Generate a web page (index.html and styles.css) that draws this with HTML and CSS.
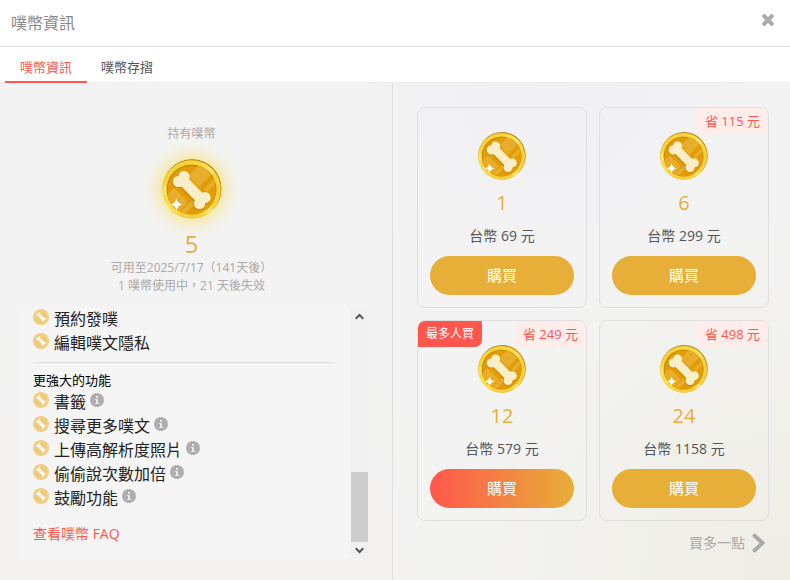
FILE: index.html
```
<!DOCTYPE html>
<html lang="zh-Hant">
<head>
  <meta charset="UTF-8" />
  <meta name="viewport" content="width=device-width, initial-scale=1.0" />
  <title>噗幣資訊</title>
  <link rel="stylesheet" href="styles.css">
</head>
<body>

  <!-- Shared icons -->
  <svg class="sprite" aria-hidden="true">
    <defs>
      <linearGradient id="rim" x1="0" y1="0" x2="1" y2="1">
        <stop offset="0" stop-color="#f3c92c" />
        <stop offset=".45" stop-color="#fae04a" />
        <stop offset=".7" stop-color="#f3cf3c" />
        <stop offset="1" stop-color="#fbdc3c" />
      </linearGradient>
      <clipPath id="face"><circle cx="29.5" cy="30.5" r="24.5" /></clipPath>
    </defs>
    <symbol id="coin" viewBox="0 0 60 60">
      <circle cx="30" cy="29.7" r="29.7" fill="#c28415" />
      <circle cx="29.5" cy="30.5" r="29.3" fill="url(#rim)" />
      <path d="M1 27l9 1-1 6-8 2zM47 8l5 5-4 4-5-5zM42 52l6-5 4 4-6 5z" fill="#fff0a0" opacity=".45" />
      <circle cx="29.5" cy="30.5" r="25" fill="#c48a12" />
      <circle cx="29.7" cy="31.2" r="24.2" fill="#e39c05" />
      <g clip-path="url(#face)" fill="#e7ad2b">
        <path d="M41 2L26 17l11 11L54 11zM-2 43l14-14 14 14L10 59zM42 30L58 14l3 3-16 16zM30 42l3 3-14 14-4-4z" />
      </g>
      <g fill="none" stroke="#cf8c08" stroke-linecap="round" transform="translate(-.8 1)">
        <path d="M21 22l18.500 19" stroke-width="11" />
        <path d="M16.500 22.500h0M22 17.500h0M43 39h0M37.500 44.500h0" stroke-width="11.500" />
      </g>
      <g fill="none" stroke="#f8efc9" stroke-linecap="round">
        <path d="M21 21.500l18.500 19" stroke-width="10.500" />
        <path d="M16.500 22.500h0M22 17.500h0M43 38.500h0M37.500 44.500h0" stroke-width="11.200" />
      </g>
      <path d="M14.500 39.500q.9 5.100 6 6-5.100.9-6 6-.9-5.100-6-6 5.100-.9 6-6z" fill="#fff" />
    </symbol>
    <symbol id="mini" viewBox="0 0 16 16">
      <circle cx="8" cy="8" r="8" fill="#f1cb7c" />
      <circle cx="8" cy="8" r="6.8" fill="none" stroke="#f8e0ab" stroke-width=".8" stroke-dasharray="1 1" />
      <path d="M5.500 5.500l5 5" stroke="#fffaf0" stroke-width="2.800" />
      <path d="M4.700 6h0M6.100 4.700h0M11.300 10h0M9.900 11.300h0" stroke="#fffaf0" stroke-width="2.600" stroke-linecap="round" />
    </symbol>
    <symbol id="info" viewBox="0 0 14 14">
      <circle cx="7" cy="7" r="7" fill="#adadad" />
      <path d="M6 3h2v2H6zM5 6h3v4h1v1H5v-1h1V7H5z" fill="#e8e8e8" />
    </symbol>
  </svg>

  <header class="header">
    <h1>噗幣資訊</h1>
    <button class="close" aria-label="關閉">
      <svg width="12" height="12" viewBox="0 0 12 12"><path d="M2.2 2.2l7.6 7.6M9.8 2.2L2.2 9.8" /></svg>
    </button>
  </header>

  <nav class="tabs">
    <a class="tab active" href="#info">噗幣資訊</a>
    <a class="tab" href="#history">噗幣存摺</a>
  </nav>

  <main class="content">
    <!-- Current balance and feature list -->
    <section class="status">
      <div class="balance">
        <h2>持有噗幣</h2>
        <svg class="coin-big"><use href="#coin" /></svg>
        <p class="owned">5</p>
        <p>可用至2025/7/17（141天後）</p>
        <p>1 噗幣使用中，21 天後失效</p>
      </div>

      <div class="features">
        <div class="feature-body">
          <ul>
            <li><svg class="mini"><use href="#mini" /></svg><span>預約發噗</span></li>
            <li><svg class="mini"><use href="#mini" /></svg><span>編輯噗文隱私</span></li>
          </ul>
          <hr>
          <h3>更強大的功能</h3>
          <ul>
            <li><svg class="mini"><use href="#mini" /></svg><span>書籤</span><svg class="info"><use href="#info" /></svg></li>
            <li><svg class="mini"><use href="#mini" /></svg><span>搜尋更多噗文</span><svg class="info"><use href="#info" /></svg></li>
            <li><svg class="mini"><use href="#mini" /></svg><span>上傳高解析度照片</span><svg class="info"><use href="#info" /></svg></li>
            <li><svg class="mini"><use href="#mini" /></svg><span>偷偷說次數加倍</span><svg class="info"><use href="#info" /></svg></li>
            <li><svg class="mini"><use href="#mini" /></svg><span>鼓勵功能</span><svg class="info"><use href="#info" /></svg></li>
          </ul>
          <a class="faq" href="#faq">查看噗幣 FAQ</a>
        </div>
        <div class="scrollbar">
          <button aria-label="向上捲動"><svg width="9" height="7" viewBox="0 0 9 7"><path d="M.7 5.8L4.5 2l3.8 3.8" /></svg></button>
          <div class="track"><div class="thumb"></div></div>
          <button aria-label="向下捲動"><svg width="9" height="7" viewBox="0 0 9 7"><path d="M.7 1.2L4.5 5l3.8-3.8" /></svg></button>
        </div>
      </div>
    </section>

    <!-- Purchase plans -->
    <section class="shop">
      <div class="plans">
        <article class="plan">
          <svg class="coin"><use href="#coin" /></svg>
          <p class="amount">1</p>
          <p class="price">台幣 69 元</p>
          <button class="buy">購買</button>
        </article>
        <article class="plan">
          <span class="save">省 115 元</span>
          <svg class="coin"><use href="#coin" /></svg>
          <p class="amount">6</p>
          <p class="price">台幣 299 元</p>
          <button class="buy">購買</button>
        </article>
        <article class="plan">
          <span class="popular">最多人買</span>
          <span class="save">省 249 元</span>
          <svg class="coin"><use href="#coin" /></svg>
          <p class="amount">12</p>
          <p class="price">台幣 579 元</p>
          <button class="buy hot">購買</button>
        </article>
        <article class="plan">
          <span class="save">省 498 元</span>
          <svg class="coin"><use href="#coin" /></svg>
          <p class="amount">24</p>
          <p class="price">台幣 1158 元</p>
          <button class="buy">購買</button>
        </article>
      </div>
      <a class="more" href="#more">買多一點
        <svg width="14" height="20" viewBox="0 0 14 20"><path d="M2.5 2.5L10.5 10l-8 7.5" /></svg>
      </a>
    </section>
  </main>

</body>
</html>
```
FILE: styles.css
```
:root {
  --clr-gold: #e7ae38;
  --clr-red: #ff574d;
  --clr-border: #dfdfe0;
  --clr-muted: #aaa;
}

* { box-sizing: border-box; margin: 0; padding: 0; }
body {
  font-family: "Open Sans", "Noto Sans CJK TC", sans-serif;
  font-size: 14px;
  min-height: 100vh;
  display: flex;
  flex-direction: column;
  background: #fff;
  color: #555;
}
button { font: inherit; border: none; background: none; cursor: pointer; }
a { text-decoration: none; }
ul { list-style: none; }
h1, h2, h3 { font-weight: 400; }
svg { flex: none; }
.sprite { position: absolute; width: 0; height: 0; }

/* Header */
.header {
  height: 47px;
  padding: 0 16px 2px 11px;
  display: flex;
  align-items: center;
  justify-content: space-between;
  border-bottom: 1px solid var(--clr-border);
}
.header h1 { font-size: 16px; color: #888; }
.close { display: flex; padding-bottom: 4px; }
.close path { stroke: #aaa; stroke-width: 4; stroke-linecap: round; }

.tabs {
  height: 36px;
  padding-left: 5px;
  display: flex;
  border-bottom: 1px solid #ececec;
}
.tab {
  height: 36px;
  padding: 0 15px;
  font-size: 13px;
  line-height: 40px;
  color: #555;
}
.tab.active { color: var(--clr-red); border-bottom: 2px solid var(--clr-red); }
.tab + .tab { padding-left: 14px; }

.content {
  flex: 1;
  display: flex;
  background:
    radial-gradient(circle at 100% 100%, #efeee5, #efeee500 40%),
    radial-gradient(circle at 20% 110%, #f3f2ee, #f3f2ee00 40%),
    radial-gradient(circle at 70% 0, #f0f0f5, #f0f0f500 30%),
    #f3f3f3;
}

/* Balance */
.status {
  flex: 0 0 393px;
  padding: 42px 24px 22px 17px;
  border-right: 1px solid var(--clr-border);
}
.balance {
  display: flex;
  flex-direction: column;
  align-items: center;
  padding-right: 2px;
  font-size: 12px;
  line-height: 18px;
  color: var(--clr-muted);
  text-align: center;
}
.balance h2 { font-size: 12px; line-height: 18px; }
.coin-big {
  width: 60px; height: 60px;
  margin: 16px 0 10px;
  border-radius: 50%;
  box-shadow: 0 0 20px #f8dc50;
}
.owned { font-size: 24px; line-height: 30px; color: var(--clr-gold); }

.features {
  margin-top: 13px;
  display: flex;
  background: #f5f5f5;
  border-radius: 8px 0 0 8px;
}
.feature-body { flex: 1; padding: 0 16px 12px; }
.feature-body li { display: flex; height: 24px; color: #222; }
.feature-body li span { font-size: 16px; line-height: 22px; margin: 0 4px 0 5px; }
.feature-body hr { border: none; border-top: 1px solid #ddd; margin: 6px 0 7px; }
.feature-body h3 { font-size: 13px; line-height: 20px; color: #000; }
.feature-body h3 + ul { padding-top: 1px; }
.mini { width: 16px; height: 16px; margin-top: 1px; }
.feature-body .info { width: 14px; height: 14px; margin-top: 2px; }
.faq { display: block; margin-top: 11px; line-height: 24px; color: var(--clr-red); }

.scrollbar {
  width: 17px;
  display: flex;
  flex-direction: column;
  background: #f0f0f0;
}
.scrollbar button { height: 16px; display: flex; align-items: center; justify-content: center; }
.scrollbar path { fill: none; stroke: #555; stroke-width: 2; }
.track { flex: 1; display: flex; align-items: flex-end; }
.thumb { width: 100%; height: 32%; background: #cdcdcd; }

/* Plans */
.shop { flex: 1; padding: 24px 21px 22px 24px; }
.plans { display: grid; grid-template-columns: 1fr 1fr; gap: 12px; }
.plan {
  position: relative;
  display: flex;
  flex-direction: column;
  align-items: center;
  padding: 24px 12px 12px;
  border: 1px solid var(--clr-border);
  border-radius: 8px;
}
.coin { width: 48px; height: 48px; }
.amount { margin-top: 8px; font-size: 20px; line-height: 30px; color: var(--clr-gold); }
.price { margin: 6px 0 8px; line-height: 24px; }
.buy {
  width: 100%;
  height: 39px;
  padding-bottom: 2px;
  border-radius: 20px;
  background: var(--clr-gold);
  color: #fff;
  font-size: 15px;
}
.buy.hot { background: linear-gradient(90deg, var(--clr-red), var(--clr-gold)); }

.save, .popular { position: absolute; top: 0; padding: 0 8px; line-height: 26px; }
.save {
  right: 0;
  font-size: 13px;
  color: var(--clr-red);
  background: #ffeceb;
  border-radius: 0 7px 0 7px;
}
.popular {
  left: 0;
  font-size: 12px;
  color: #fff;
  background: var(--clr-red);
  border-radius: 7px 0 7px 0;
}

.more {
  display: flex;
  align-items: center;
  justify-content: flex-end;
  gap: 7px;
  margin-top: 10px;
  padding-right: 3px;
  line-height: 24px;
  color: var(--clr-muted);
}
.more path { fill: none; stroke: #aaa; stroke-width: 4; stroke-linecap: round; }
```
